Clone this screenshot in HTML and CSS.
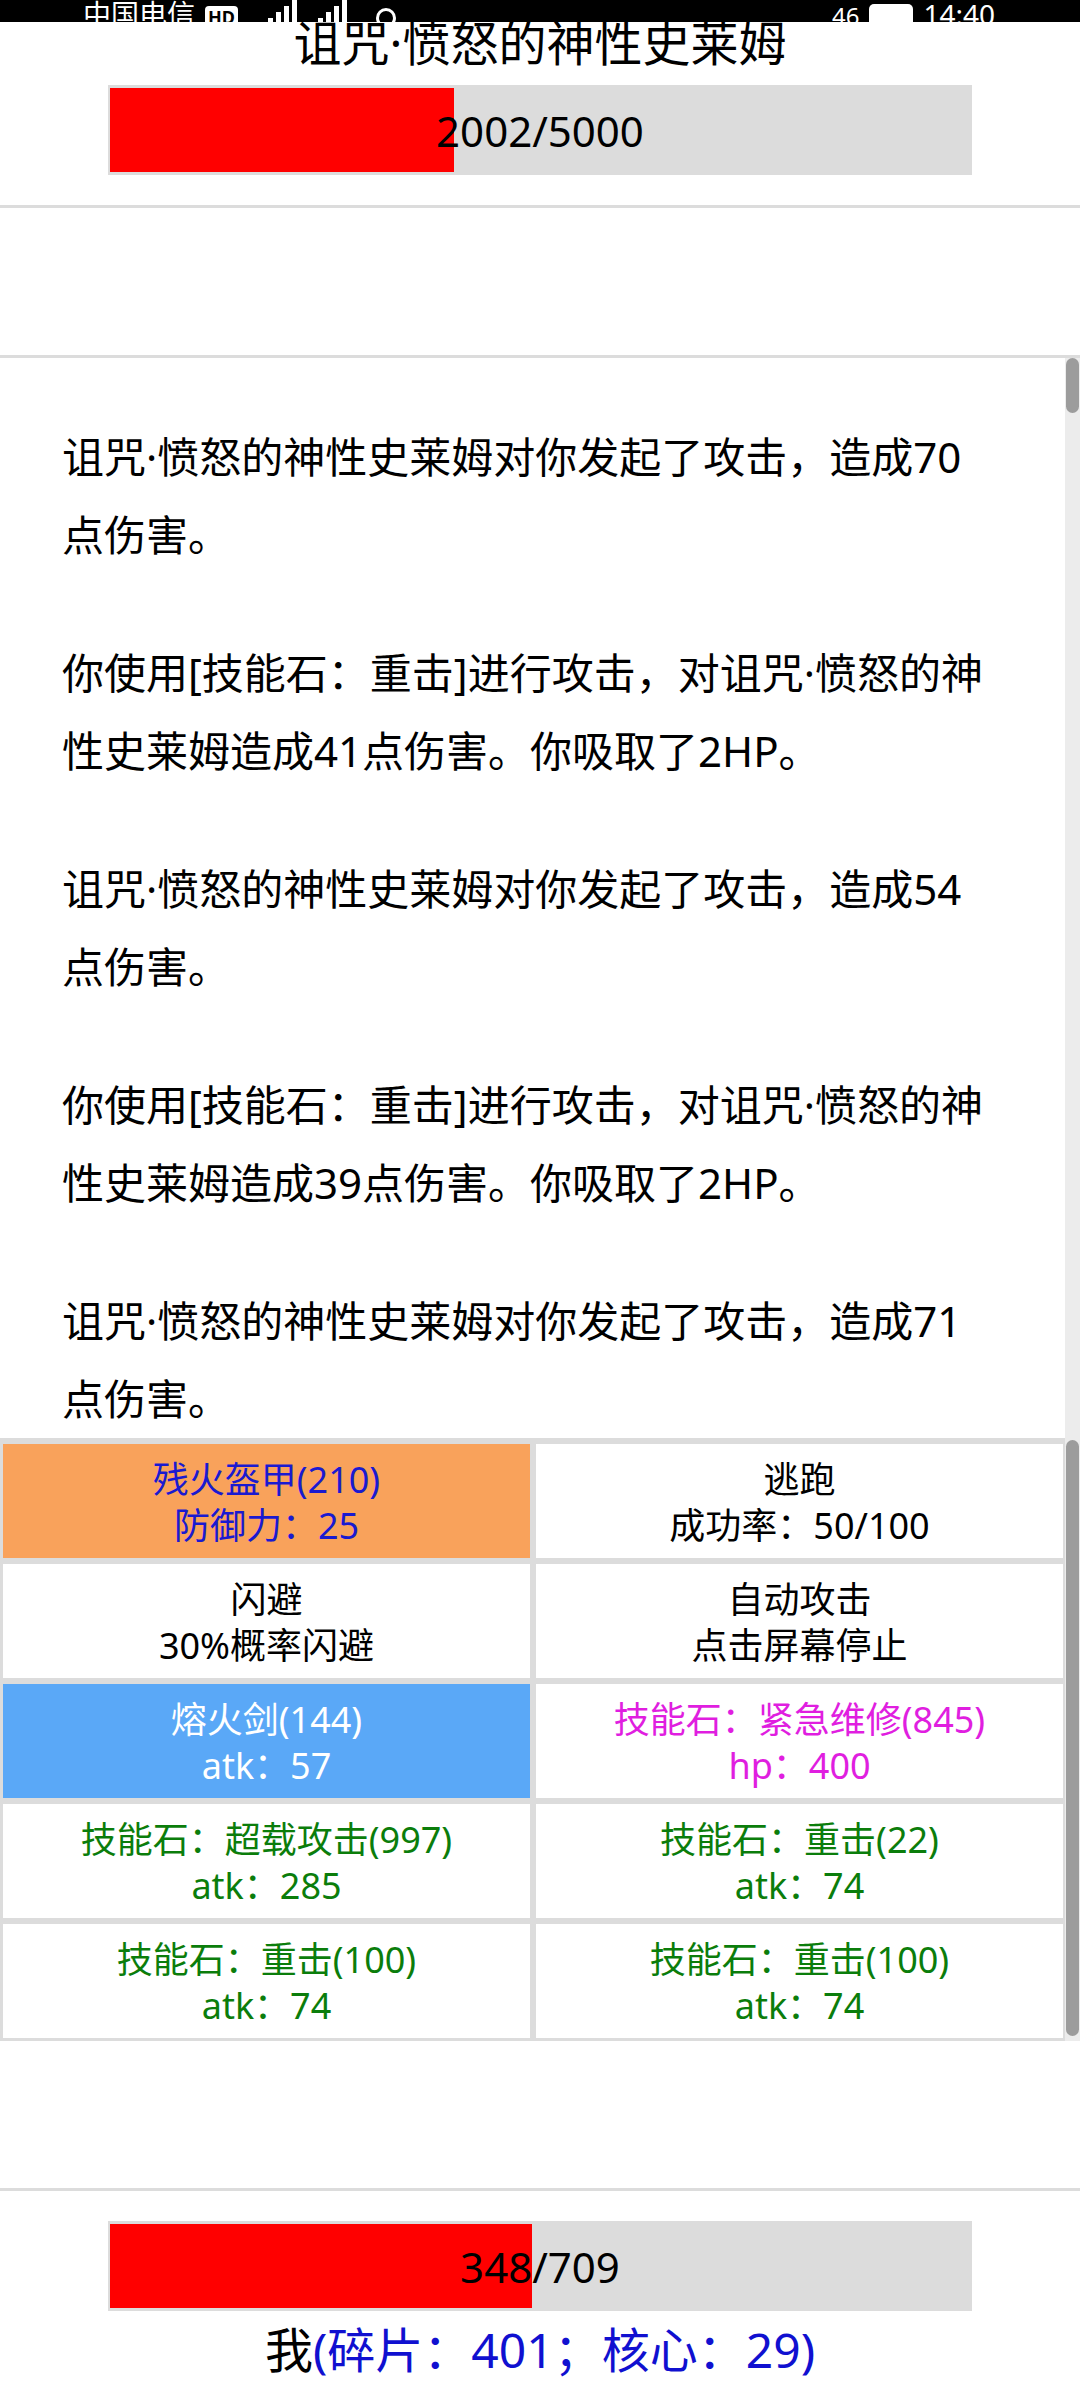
FILE: index.html
```html
<!DOCTYPE html>
<html>
<head>
  <meta charset="utf-8">
  <link rel="stylesheet" href="styles.css">
</head>
<body>
  <div class="status">
    <div class="status-left">
      <span class="carrier">中国电信</span>
      <span class="hd">HD</span>
      <svg class="signal" width="100" height="28" viewBox="0 0 100 28">
        <rect x="2" y="18" width="5" height="10" fill="#fff"/>
        <rect x="10" y="12" width="5" height="16" fill="#fff"/>
        <rect x="18" y="6" width="5" height="22" fill="#fff"/>
        <rect x="26" y="0" width="5" height="28" fill="#fff"/>
        <rect x="52" y="18" width="5" height="10" fill="#fff"/>
        <rect x="60" y="12" width="5" height="16" fill="#fff"/>
        <rect x="68" y="6" width="5" height="22" fill="#fff"/>
        <rect x="76" y="0" width="5" height="28" fill="#fff"/>
      </svg>
      <span class="dot-icon"></span>
    </div>
    <div class="status-right">
      <span class="net">46</span>
      <span class="battery"></span>
      <span class="clock">14:40</span>
    </div>
  </div>

  <section class="boss">
    <h1 class="name">诅咒·愤怒的神性史莱姆</h1>
    <div class="bar">
      <div class="fill" style="width: 40.04%"></div>
      <div class="bar-text">2002/5000</div>
    </div>
  </section>

  <section class="spacer"></section>

  <section class="log">
    <div class="log-body">
      <p>诅咒·愤怒的神性史莱姆对你发起了攻击，造成70点伤害。</p>
      <p>你使用[技能石：重击]进行攻击，对诅咒·愤怒的神性史莱姆造成41点伤害。你吸取了2HP。</p>
      <p>诅咒·愤怒的神性史莱姆对你发起了攻击，造成54点伤害。</p>
      <p>你使用[技能石：重击]进行攻击，对诅咒·愤怒的神性史莱姆造成39点伤害。你吸取了2HP。</p>
      <p>诅咒·愤怒的神性史莱姆对你发起了攻击，造成71点伤害。</p>
    </div>
    <div class="scroll"><div class="thumb thumb-short"></div></div>
  </section>

  <section class="actions">
    <div class="grid">
      <div class="cell armor"><span>残火盔甲(210)</span><span>防御力：25</span></div>
      <div class="cell"><span>逃跑</span><span>成功率：50/100</span></div>
      <div class="cell"><span>闪避</span><span>30%概率闪避</span></div>
      <div class="cell"><span>自动攻击</span><span>点击屏幕停止</span></div>
      <div class="cell weapon"><span>熔火剑(144)</span><span>atk：57</span></div>
      <div class="cell heal"><span>技能石：紧急维修(845)</span><span>hp：400</span></div>
      <div class="cell skill"><span>技能石：超载攻击(997)</span><span>atk：285</span></div>
      <div class="cell skill"><span>技能石：重击(22)</span><span>atk：74</span></div>
      <div class="cell skill"><span>技能石：重击(100)</span><span>atk：74</span></div>
      <div class="cell skill"><span>技能石：重击(100)</span><span>atk：74</span></div>
    </div>
    <div class="scroll"><div class="thumb thumb-long"></div></div>
  </section>

  <section class="spacer"></section>

  <section class="player">
    <div class="bar">
      <div class="fill" style="width: 49.08%"></div>
      <div class="bar-text">348/709</div>
    </div>
    <div class="me">我<span class="res">(碎片：401；核心：29)</span></div>
  </section>
</body>
</html>
```

FILE: styles.css
```css
body {
  margin: 0;
  font-family: "Noto Sans", "Noto Sans CJK SC", sans-serif;
  color: #000;
  background: #fff;
}

.status {
  height: 22px;
  background: #000;
  color: #fff;
  display: flex;
  justify-content: space-between;
  align-items: flex-end;
  padding: 0 85px 0 83px;
  overflow: hidden;
}
.status-left,
.status-right {
  display: flex;
  align-items: flex-end;
  gap: 10px;
  margin-bottom: -6px;
}
.carrier {
  font-size: 28px;
  line-height: 28px;
}
.hd {
  font-size: 18px;
  line-height: 22px;
  padding: 0 3px;
  border-radius: 4px;
  background: #fff;
  color: #000;
  font-weight: bold;
}
.signal {
  margin-left: 18px;
}
.dot-icon {
  width: 14px;
  height: 14px;
  border: 3px solid #fff;
  border-radius: 50%;
}
.net {
  font-size: 24px;
  line-height: 24px;
}
.battery {
  width: 44px;
  height: 24px;
  border-radius: 5px;
  background: #fff;
}
.clock {
  font-size: 28px;
  line-height: 28px;
}

.boss {
  text-align: center;
  padding-bottom: 30px;
  border-bottom: 3px solid #dcdcdc;
}
.name {
  margin: 0;
  font-size: 48px;
  font-weight: normal;
  line-height: 42px;
}

.bar {
  display: grid;
  width: 80%;
  height: 90px;
  box-sizing: border-box;
  margin: 21px auto 0;
  padding: 3px 2px;
  background: #dcdcdc;
}
.fill,
.bar-text {
  grid-area: 1 / 1;
}
.fill {
  height: 100%;
  background: #ff0000;
}
.bar-text {
  display: flex;
  align-items: center;
  justify-content: center;
  font-size: 42px;
}

.spacer {
  height: 147px;
  border-bottom: 3px solid #dcdcdc;
}

.log {
  display: flex;
  height: 1080px;
}
.log-body {
  flex: 1;
  overflow: hidden;
  padding: 0 72px 0 62px;
  font-size: 42px;
  line-height: 78px;
}
.log-body p {
  margin: 60px 0;
}

.scroll {
  width: 15px;
  flex: none;
  background: #ececec;
}
.thumb {
  margin: 0 1px;
  border-radius: 7px;
  background: #9c9c9c;
}
.thumb-short {
  height: 55px;
}
.thumb-long {
  height: 596px;
  margin-top: 2px;
}

.actions {
  display: flex;
}
.grid {
  flex: 1;
  display: grid;
  grid-template-columns: 1fr 1fr;
  grid-auto-rows: 114px;
  gap: 6px;
  padding: 6px 2px 3px 3px;
  background: #dcdcdc;
}
.cell {
  display: flex;
  flex-direction: column;
  align-items: center;
  justify-content: center;
  background: #fff;
  font-size: 36px;
  line-height: 46px;
  padding-top: 4px;
}
.armor {
  background: #f9a25b;
  color: #1a1ad0;
}
.weapon {
  background: #5aa8f7;
  color: #fff;
}
.heal {
  color: #e01ee0;
}
.skill {
  color: #0b7d0b;
}

.player {
  padding-top: 30px;
  text-align: center;
}
.player .bar {
  margin-top: 0;
}
.me {
  margin-top: 11px;
  font-size: 48px;
  line-height: 56px;
}
.res {
  color: #1010d0;
}
```
